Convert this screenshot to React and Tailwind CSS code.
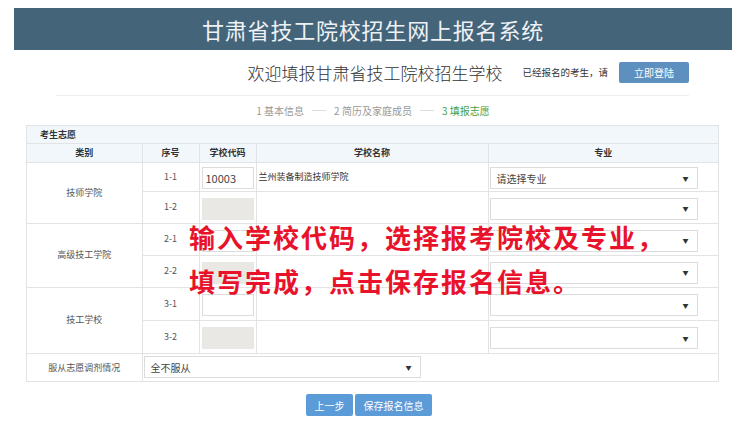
const GROUPS = [
  {
    cat: '技师学院',
    rows: [
      { no: '1-1', code: '10003', name: '兰州装备制造技师学院', major: '请选择专业', h: 'h-[29px]' },
      { no: '1-2', h: 'h-[32px]' },
    ],
  },
  {
    cat: '高级技工学院',
    rows: [
      { no: '2-1', h: 'h-[32px]' },
      { no: '2-2', h: 'h-[32px]' },
    ],
  },
  {
    cat: '技工学校',
    rows: [
      { no: '3-1', h: 'h-[33px]' },
      { no: '3-2', h: 'h-[33px]' },
    ],
  },
];

function SelectBox({ value, className }) {
  return (
    <div className={`flex items-center justify-between h-[22px] border border-[#dcdcdc] bg-white pl-[6px] pr-[8px] ${className}`}>
      <span className="text-[10px] text-[#444]">{value}</span>
      <span className="text-[6px] text-[#333]">▼</span>
    </div>
  );
}

export default function App() {
  return (
    <div className="relative w-[746px] h-[426px] bg-white overflow-hidden font-['Noto_Sans_CJK_SC',sans-serif]">
      {/* Header */}
      <div className="mx-[14px] mt-[8px] h-[42px] bg-[#44647a] flex items-center justify-center">
        <h1 className="text-[22px] text-[#eef2f4] tracking-[0.8px]">甘肃省技工院校招生网上报名系统</h1>
      </div>

      {/* Welcome */}
      <div className="mx-[56px] w-[633px] h-[46px] border-b border-[#eeeeee] flex items-center justify-end">
        <span className="text-[17px] font-light text-[#333] mr-[20px]">欢迎填报甘肃省技工院校招生学校</span>
        <span className="text-[9.5px] text-[#333] mr-[11px]">已经报名的考生，请</span>
        <button className="w-[70px] h-[21px] rounded-[2px] bg-[#5d8fbf] text-white text-[10px]">立即登陆</button>
      </div>

      {/* Steps */}
      <div className="h-[29px] flex items-center justify-center gap-[8px] text-[10px] text-[#999]">
        <span>1 基本信息</span>
        <span className="w-[14px] border-t border-[#ddd]" />
        <span>2 简历及家庭成员</span>
        <span className="w-[14px] border-t border-[#ddd]" />
        <span className="text-[#45a045]">3 填报志愿</span>
      </div>

      {/* Table */}
      <div className="ml-[26px] w-[693px] border border-[#e3e3e3]">
        <div className="h-[18px] bg-[#f2f7fb] border-b border-[#e3e3e3] flex items-center pl-[13px] text-[9px] font-bold text-[#333]">考生志愿</div>
        <table className="w-full table-fixed border-collapse text-[9px] text-[#555]">
          <colgroup>
            <col className="w-[115px]" />
            <col className="w-[57px]" />
            <col className="w-[57px]" />
            <col className="w-[232px]" />
            <col />
          </colgroup>
          <thead>
            <tr className="h-[18px] bg-[#f2f7fb] text-[#333] font-bold">
              <th className="border-r border-b border-[#e3e3e3] font-bold">类别</th>
              <th className="border-r border-b border-[#e3e3e3] font-bold">序号</th>
              <th className="border-r border-b border-[#e3e3e3] font-bold">学校代码</th>
              <th className="border-r border-b border-[#e3e3e3] font-bold">学校名称</th>
              <th className="border-b border-[#e3e3e3] font-bold">专业</th>
            </tr>
          </thead>
          <tbody>
            {GROUPS.map((g) =>
              g.rows.map((r, i) => (
                <tr key={r.no} className={r.h}>
                  {i === 0 && (
                    <td rowSpan={2} className="border-r border-b border-[#e3e3e3] text-center">{g.cat}</td>
                  )}
                  <td className="border-r border-b border-[#e3e3e3] text-center">{r.no}</td>
                  <td className="border-r border-b border-[#e3e3e3] px-[2px] pt-[3px]">
                    {r.no.endsWith('1') ? (
                      <div className="h-[22px] border border-[#dcdcdc] bg-white flex items-center pl-[3px] text-[11px] text-[#444]">{r.code}</div>
                    ) : (
                      <div className="h-[22px] bg-[#e9e8e5]" />
                    )}
                  </td>
                  <td className="border-r border-b border-[#e3e3e3] pl-[2px] text-[#333]">{r.name}</td>
                  <td className="border-b border-[#e3e3e3] pl-[1px] pt-[3px]">
                    <SelectBox value={r.major} className="w-[208px]" />
                  </td>
                </tr>
              ))
            )}
            <tr className="h-[28px]">
              <td className="border-r border-[#e3e3e3] text-center">服从志愿调剂情况</td>
              <td colSpan={4} className="pl-[1px]">
                <SelectBox value="全不服从" className="w-[277px]" />
              </td>
            </tr>
          </tbody>
        </table>
      </div>

      {/* Buttons */}
      <div className="mt-[12px] flex justify-center gap-[2px]">
        <button className="ml-[-8px] w-[47px] h-[22px] rounded-[2px] bg-[#5b9bd8] text-white text-[10px]">上一步</button>
        <button className="w-[77px] h-[22px] rounded-[2px] bg-[#5b9bd8] text-white text-[10px]">保存报名信息</button>
      </div>

      {/* Overlay caption */}
      <div className="absolute left-[189px] top-[215px] text-[#e8132b] text-[26px] font-bold leading-[44px] tracking-[2px] font-['Noto_Sans_CJK_SC',serif]">
        <p>输入学校代码，选择报考院校及专业，</p>
        <p>填写完成，点击保存报名信息。</p>
      </div>
    </div>
  );
}
